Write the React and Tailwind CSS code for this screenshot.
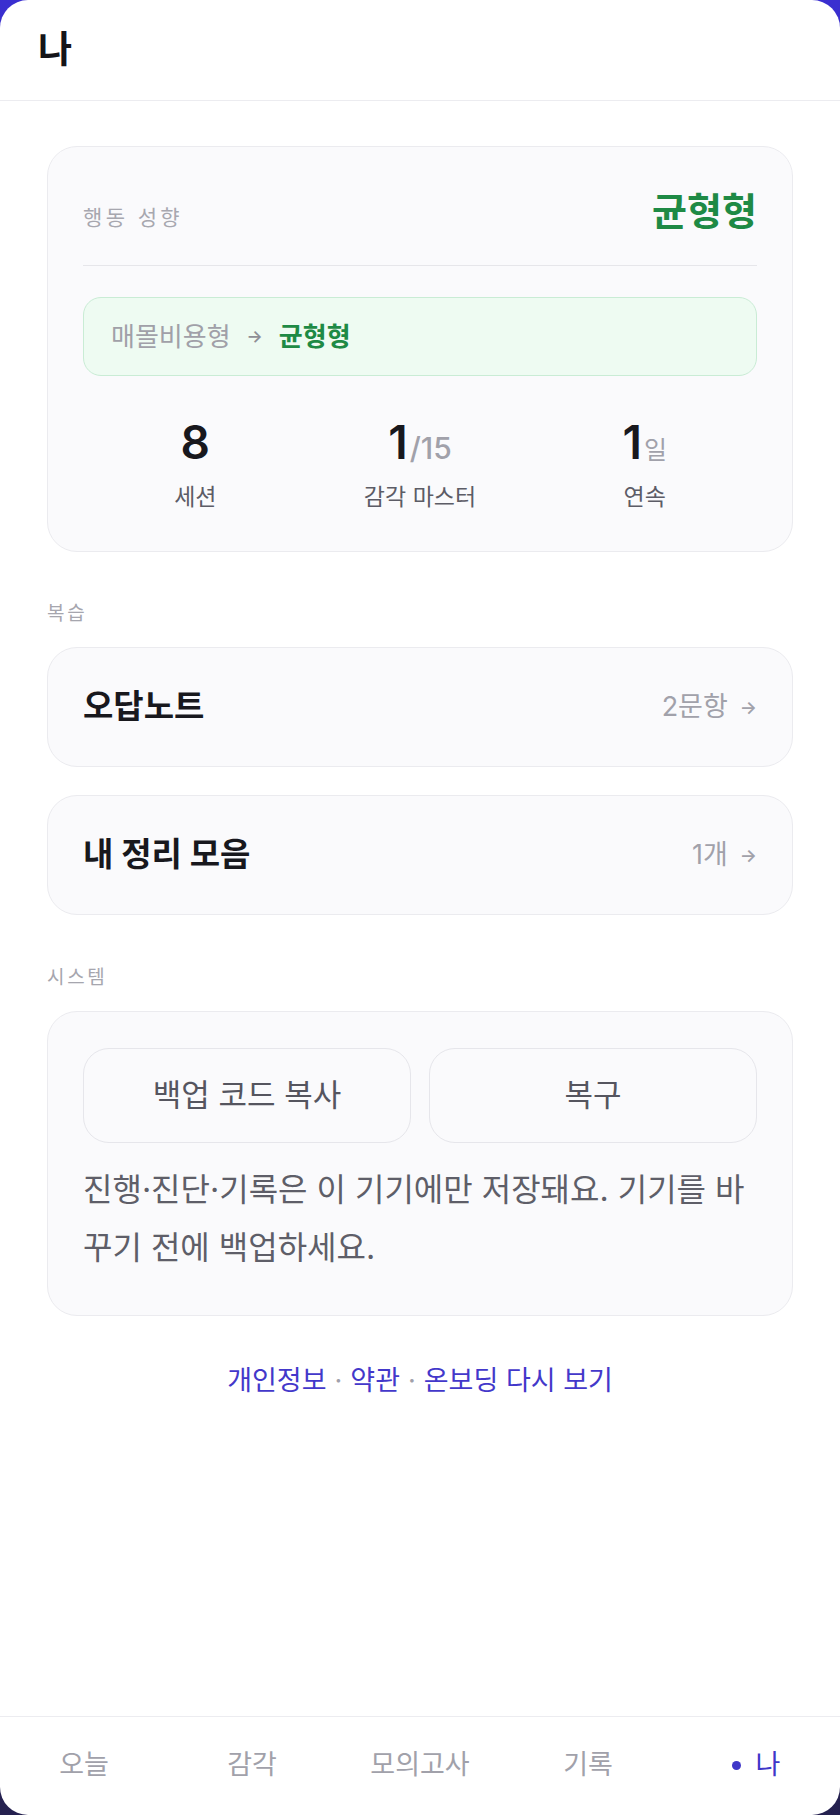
import React from 'react';

const FONT = { fontFamily: 'Inter, "Noto Sans CJK KR", "Noto Sans", sans-serif' };

function Stat({ value, unit, unitClass, label }) {
  return (
    <div className="flex flex-col items-center">
      <div className="flex items-baseline h-[56px]">
        <span className="text-[46px] leading-[56px] font-semibold text-[#18181d]">{value}</span>
        {unit && <span className={unitClass}>{unit}</span>}
      </div>
      <div className="mt-[12px] text-[23px] leading-[30px] text-[#5c5c66]">{label}</div>
    </div>
  );
}

function LinkCard({ title, meta }) {
  return (
    <div className="h-[120px] px-[35px] flex items-center justify-between rounded-[30px] border border-[#ebebef] bg-[#fafafc]">
      <span className="text-[33px] font-bold text-[#18181d]">{title}</span>
      <span className="flex items-center text-[#a1a1aa]">
        <span className="text-[27px]">{meta}</span>
        <span className="ml-[12px] text-[18px] font-semibold">→</span>
      </span>
    </div>
  );
}

export default function App() {
  const tabs = ['오늘', '감각', '모의고사', '기록'];

  return (
    <div className="min-h-screen bg-gradient-to-b from-[#3a2fd0] to-[#25214f]" style={FONT}>
      <div className="h-[1815px] bg-white rounded-[28px] flex flex-col overflow-hidden">
        {/* header */}
        <header className="h-[101px] shrink-0 border-b border-[#ececf0] px-[38px] flex items-center">
          <h1 className="text-[37px] font-semibold text-[#141418]">나</h1>
        </header>

        <main className="flex-1 px-[47px] pt-[45px]">
          {/* behaviour card */}
          <section className="rounded-[30px] border border-[#ebebef] bg-[#fafafc] px-[35px] pt-[36px] pb-[39px]">
            <div className="h-[56px] flex items-baseline justify-between">
              <span className="text-[21px] tracking-[0.16em] text-[#a7a7af]">행동 성향</span>
              <span className="text-[38px] leading-[56px] font-bold text-[#1e8a45]">균형형</span>
            </div>
            <div className="mt-[26px] h-px bg-[#e6e6ea]"></div>
            <div className="mt-[31px] h-[79px] rounded-[18px] border border-[#c9ecd5] bg-[#eefbf2] px-[27px] flex items-center">
              <span className="text-[26px] text-[#a0a0a8]">매몰비용형</span>
              <span className="mx-[16px] text-[17px] font-semibold text-[#8e8e96]">→</span>
              <span className="text-[26px] font-bold text-[#1e8a45]">균형형</span>
            </div>
            <div className="mt-[38px] grid grid-cols-3">
              <Stat value="8" label="세션" />
              <Stat value="1" unit="/15" unitClass="ml-[2px] text-[30px] font-medium text-[#a1a1aa]" label="감각 마스터" />
              <Stat value="1" unit="일" unitClass="ml-[2px] text-[25px] text-[#a1a1aa]" label="연속" />
            </div>
          </section>

          {/* review */}
          <div className="mt-[49px] text-[19px] leading-[26px] tracking-[0.14em] text-[#a6a6ae]">복습</div>
          <div className="mt-[20px] flex flex-col gap-[28px]">
            <LinkCard title="오답노트" meta="2문항" />
            <LinkCard title="내 정리 모음" meta="1개" />
          </div>

          {/* system */}
          <div className="mt-[50px] text-[19px] leading-[26px] tracking-[0.14em] text-[#a6a6ae]">시스템</div>
          <section className="mt-[20px] rounded-[30px] border border-[#ebebef] bg-[#fafafc] px-[35px] pt-[36px] pb-[38px]">
            <div className="grid grid-cols-2 gap-[18px]">
              <button className="h-[95px] rounded-[26px] border border-[#e6e6eb] bg-[#fafafc] text-[31px] text-[#55555f]">
                백업 코드 복사
              </button>
              <button className="h-[95px] rounded-[26px] border border-[#e6e6eb] bg-[#fafafc] text-[31px] text-[#55555f]">
                복구
              </button>
            </div>
            <p className="mt-[18px] text-[32px] leading-[58px] text-[#5e5e68]">
              진행·진단·기록은 이 기기에만 저장돼요. 기기를 바꾸기 전에 백업하세요.
            </p>
          </section>

          <div className="mt-[47px] text-center text-[27px] leading-[36px] text-[#4338ca]">
            <span>개인정보</span>
            <span className="mx-[8px] text-[#a1a1aa]">·</span>
            <span>약관</span>
            <span className="mx-[8px] text-[#a1a1aa]">·</span>
            <span>온보딩 다시 보기</span>
          </div>
        </main>

        {/* bottom nav */}
        <nav className="h-[99px] shrink-0 border-t border-[#ececf0] grid grid-cols-5 items-center pb-[2px]">
          {tabs.map((t) => (
            <div key={t} className="text-center text-[27px] text-[#a1a1aa]">{t}</div>
          ))}
          <div className="flex items-center justify-center gap-[15px] text-[27px] text-[#3f37c9]">
            <span className="w-[9px] h-[9px] rounded-full bg-[#3f37c9]"></span>
            <span>나</span>
          </div>
        </nav>
      </div>
    </div>
  );
}
